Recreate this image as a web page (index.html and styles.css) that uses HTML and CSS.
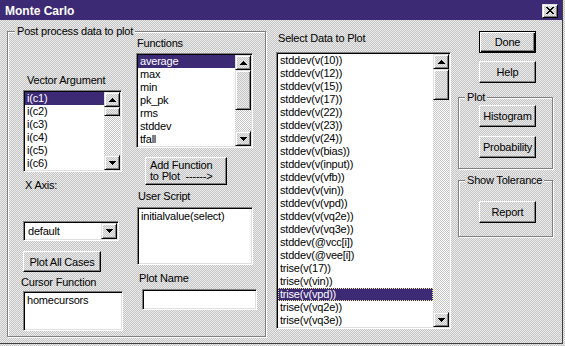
FILE: index.html
```html
<!DOCTYPE html>
<html lang="en">
<head>
    <meta charset="UTF-8">
    <title>Monte Carlo</title>
    <link rel="stylesheet" href="styles.css">
</head>
<body>
    <div class="window">
        <div class="titlebar">
            <span class="title">Monte Carlo</span>
            <span class="close raised">
                <svg width="8" height="7" viewBox="0 0 8 7" shape-rendering="crispEdges"><path d="M0 0h2v1h-2zM6 0h2v1h-2zM1 1h2v1h-2zM5 1h2v1h-2zM2 2h4v1h-4zM3 3h2v1h-2zM2 4h4v1h-4zM1 5h2v1h-2zM5 5h2v1h-2zM0 6h2v1h-2zM6 6h2v1h-2z" fill="#000"/></svg>
            </span>
        </div>

        <div class="content">
            <!-- left group -->
            <fieldset class="group post">
                <legend class="legend-post">Post process data to plot</legend>
                <div class="post-cols">
                    <div class="col col-left">
                        <div class="lbl lbl-vector">Vector Argument</div>
                        <div class="listbox lb-vector">
                            <ul class="items">
                                <li class="sel">i(c1)</li>
                                <li>i(c2)</li>
                                <li>i(c3)</li>
                                <li>i(c4)</li>
                                <li>i(c5)</li>
                                <li>i(c6)</li>
                            </ul>
                            <div class="vscroll">
                                <span class="sbtn raised"><svg width="7" height="4" shape-rendering="crispEdges"><path d="M3 0h1v1h-1zM2 1h3v1h-3zM1 2h5v1h-5zM0 3h7v1h-7z"/></svg></span>
                                <span class="thumb raised thumb-vector"></span>
                                <span class="track"></span>
                                <span class="sbtn raised"><svg width="7" height="4" shape-rendering="crispEdges"><path d="M0 0h7v1h-7zM1 1h5v1h-5zM2 2h3v1h-3zM3 3h1v1h-1z"/></svg></span>
                            </div>
                        </div>
                        <div class="lbl lbl-xaxis">X Axis:</div>
                        <div class="combo">
                            <span class="combo-text">default</span>
                            <span class="sbtn raised"><svg width="7" height="4" shape-rendering="crispEdges"><path d="M0 0h7v1h-7zM1 1h5v1h-5zM2 2h3v1h-3zM3 3h1v1h-1z"/></svg></span>
                        </div>
                        <button class="btn btn-plotall">Plot All Cases</button>
                        <div class="lbl lbl-cursor">Cursor Function</div>
                        <div class="field field-cursor"><div class="field-text">homecursors</div></div>
                    </div>

                    <div class="col col-right">
                        <div class="lbl lbl-functions">Functions</div>
                        <div class="listbox lb-functions">
                            <ul class="items">
                                <li class="sel">average</li>
                                <li>max</li>
                                <li>min</li>
                                <li>pk_pk</li>
                                <li>rms</li>
                                <li>stddev</li>
                                <li>tfall</li>
                            </ul>
                            <div class="vscroll">
                                <span class="sbtn raised"><svg width="7" height="4" shape-rendering="crispEdges"><path d="M3 0h1v1h-1zM2 1h3v1h-3zM1 2h5v1h-5zM0 3h7v1h-7z"/></svg></span>
                                <span class="thumb raised thumb-functions"></span>
                                <span class="track"></span>
                                <span class="sbtn raised"><svg width="7" height="4" shape-rendering="crispEdges"><path d="M0 0h7v1h-7zM1 1h5v1h-5zM2 2h3v1h-3zM3 3h1v1h-1z"/></svg></span>
                            </div>
                        </div>
                        <button class="btn btn-addfn">Add Function<br>to Plot&nbsp;&nbsp;------&gt;</button>
                        <div class="lbl lbl-script">User Script</div>
                        <div class="field field-script"><div class="field-text">initialvalue(select)</div></div>
                        <div class="lbl lbl-plotname">Plot Name</div>
                        <div class="field field-plotname"></div>
                    </div>
                </div>
            </fieldset>

            <!-- data list -->
            <div class="data-col">
                <div class="lbl lbl-data">Select Data to Plot</div>
                <div class="listbox lb-data">
                    <ul class="items">
                        <li>stddev(v(10))</li>
                        <li>stddev(v(12))</li>
                        <li>stddev(v(15))</li>
                        <li>stddev(v(17))</li>
                        <li>stddev(v(22))</li>
                        <li>stddev(v(23))</li>
                        <li>stddev(v(24))</li>
                        <li>stddev(v(bias))</li>
                        <li>stddev(v(input))</li>
                        <li>stddev(v(vfb))</li>
                        <li>stddev(v(vin))</li>
                        <li>stddev(v(vpd))</li>
                        <li>stddev(v(vq2e))</li>
                        <li>stddev(v(vq3e))</li>
                        <li>stddev(@vcc[i])</li>
                        <li>stddev(@vee[i])</li>
                        <li>trise(v(17))</li>
                        <li>trise(v(vin))</li>
                        <li class="sel focus">trise(v(vpd))</li>
                        <li>trise(v(vq2e))</li>
                        <li>trise(v(vq3e))</li>
                    </ul>
                    <div class="vscroll">
                        <span class="sbtn raised"><svg width="7" height="4" shape-rendering="crispEdges"><path d="M3 0h1v1h-1zM2 1h3v1h-3zM1 2h5v1h-5zM0 3h7v1h-7z"/></svg></span>
                        <span class="thumb raised thumb-data"></span>
                        <span class="track"></span>
                        <span class="sbtn raised"><svg width="7" height="4" shape-rendering="crispEdges"><path d="M0 0h7v1h-7zM1 1h5v1h-5zM2 2h3v1h-3zM3 3h1v1h-1z"/></svg></span>
                    </div>
                </div>
            </div>

            <!-- buttons -->
            <div class="side-col">
                <button class="btn default btn-done">Done</button>
                <button class="btn btn-help">Help</button>
                <fieldset class="group plot">
                    <legend class="legend-side">Plot</legend>
                    <button class="btn btn-hist">Histogram</button>
                    <button class="btn btn-prob">Probability</button>
                </fieldset>
                <fieldset class="group tol">
                    <legend class="legend-side">Show Tolerance</legend>
                    <button class="btn btn-report">Report</button>
                </fieldset>
            </div>
        </div>
    </div>
</body>
</html>
```

FILE: styles.css
```css
* { box-sizing: border-box; }
body {
    margin: 0;
    font-family: "Liberation Sans", Arial, sans-serif;
    font-size: 11px;
    letter-spacing: -0.2px;
    color: #000;
    background-color: #d8d8d8;
    background-image: repeating-conic-gradient(#c4c4c4 0% 25%, #ececec 0% 50%);
    background-size: 2px 2px;
}
.window {
    width: 563px;
    height: 344px;
    border-right: 1px solid #404040;
    border-bottom: 1px solid #404040;
    display: flex;
    flex-direction: column;
}
.titlebar {
    height: 20px;
    background: #3d2a74;
    color: #fff;
    display: flex;
    align-items: center;
    justify-content: space-between;
    padding: 1px 4px 0 5px;
}
.title { font-weight: bold; font-size: 12px; letter-spacing: 0; }
.close {
    width: 16px;
    height: 14px;
    display: flex;
    align-items: center;
    justify-content: center;
}

/* 3d borders */
.raised {
    border: 1px solid;
    border-color: #dfdfdf #000 #000 #dfdfdf;
    box-shadow: inset 1px 1px #fff, inset -1px -1px #808080;
    background-color: #d8d8d8;
    background-image: repeating-conic-gradient(#c4c4c4 0% 25%, #ececec 0% 50%);
    background-size: 2px 2px;
}
.listbox, .field, .combo {
    border: 1px solid;
    border-color: #808080 #fff #fff #808080;
    box-shadow: inset 1px 1px #000, inset -1px -1px #dfdfdf;
    background: #fff;
    padding: 1px;
}

.content { display: flex; align-items: flex-start; flex: 1; }
.lbl { line-height: 13px; white-space: nowrap; }

/* group boxes */
.group {
    margin: 0;
    padding: 0;
    border: 1px solid #808080;
    box-shadow: inset 1px 1px #fff, 1px 1px #fff;
    min-width: 0;
}
.group legend {
    padding: 0 2px;
    line-height: 13px;
    background-color: #d8d8d8;
    background-image: repeating-conic-gradient(#c4c4c4 0% 25%, #ececec 0% 50%);
    background-size: 2px 2px;
}
.post { width: 259px; height: 312px; margin: 5px 0 0 7px; }
.legend-post { margin-left: 7px; }
.post-cols { display: flex; margin-left: 15px; }
.col { display: flex; flex-direction: column; align-items: flex-start; }
.col-left { width: 100px; }
.col-right { width: 121px; margin-left: 13px; }

/* list boxes */
.listbox { display: flex; }
.items {
    flex: 1;
    list-style: none;
    margin: 0;
    padding: 0;
    overflow: hidden;
}
.items li { height: 13px; line-height: 13px; padding-left: 2px; white-space: nowrap; }
.items li.sel { background: #3d2a74; color: #fff; }
.items li.focus { outline: 1px dotted #f0e68c; outline-offset: -1px; }

.vscroll { width: 16px; display: flex; flex-direction: column; }
.sbtn {
    width: 16px;
    height: 15px;
    flex: none;
    display: flex;
    align-items: center;
    justify-content: center;
}
.sbtn svg { fill: #000; }
.thumb { display: block; flex: none; width: 16px; }
.track {
    flex: 1;
    background-color: #e0e0e0;
    background-image: repeating-conic-gradient(#c4c4c4 0% 25%, #fff 0% 50%);
    background-size: 2px 2px;
}
.thumb-vector { height: 9px; }
.thumb-functions { height: 40px; }
.thumb-data { height: 31px; }

/* buttons */
.btn {
    font: inherit;
    letter-spacing: inherit;
    color: #000;
    padding: 0;
    border: 1px solid;
    border-color: #fff #000 #000 #fff;
    box-shadow: inset -1px -1px #808080;
    background: transparent;
    cursor: pointer;
}
.btn.default {
    border-color: #000;
    box-shadow: inset 1px 1px #fff, inset -1px -1px #000, inset -2px -2px #808080;
}

/* left column */
.lbl-vector { margin-top: 36px; margin-left: 4px; }
.lb-vector { margin-top: 3px; width: 99px; height: 82px; }
.lbl-xaxis { margin-top: 7px; margin-left: 2px; }
.combo { margin-top: 29px; width: 96px; height: 20px; display: flex; }
.combo-text { flex: 1; line-height: 16px; padding-left: 3px; }
.combo .sbtn { height: 16px; }
.btn-plotall { margin-top: 10px; width: 78px; height: 21px; }
.lbl-cursor { margin-top: 4px; margin-left: -2px; }
.field-cursor { margin-top: 2px; width: 100px; height: 40px; }
.field-text { line-height: 13px; padding: 1px 2px; white-space: nowrap; }

/* right column of the group */
.lbl-functions { margin-top: -1px; margin-left: 1px; }
.lb-functions { margin-top: 3px; width: 117px; height: 95px; }
.btn-addfn {
    margin-top: 9px;
    margin-left: 9px;
    width: 82px;
    height: 28px;
    line-height: 11px;
    text-align: left;
    padding-left: 4px;
}
.lbl-script { margin-top: 5px; margin-left: 2px; }
.field-script { margin-top: 4px; margin-left: 1px; width: 116px; height: 58px; }
.lbl-plotname { margin-top: 7px; margin-left: 3px; }
.field-plotname { margin-top: 4px; margin-left: 6px; width: 115px; height: 21px; }

/* data column */
.data-col { margin: 12px 0 0 10px; display: flex; flex-direction: column; }
.lbl-data { margin-left: 2px; }
.lb-data { margin-top: 7px; width: 175px; height: 277px; }

/* side column */
.side-col { width: 95px; margin: 11px 0 0 7px; display: flex; flex-direction: column; align-items: flex-start; }
.side-col .btn { width: 57px; height: 22px; margin-left: 21px; flex: none; }
.btn-help { margin-top: 8px; }
.legend-side { margin-left: 6px; }
.plot { width: 95px; height: 78px; margin-top: 8px; }
.plot .btn { margin-left: 20px; }
.btn-hist { margin-top: 1px; }
.btn-prob { margin-top: 9px; }
.tol { width: 95px; height: 63px; margin-top: 5px; }
.tol .btn { margin-left: 20px; }
.btn-report { margin-top: 14px; }
```
